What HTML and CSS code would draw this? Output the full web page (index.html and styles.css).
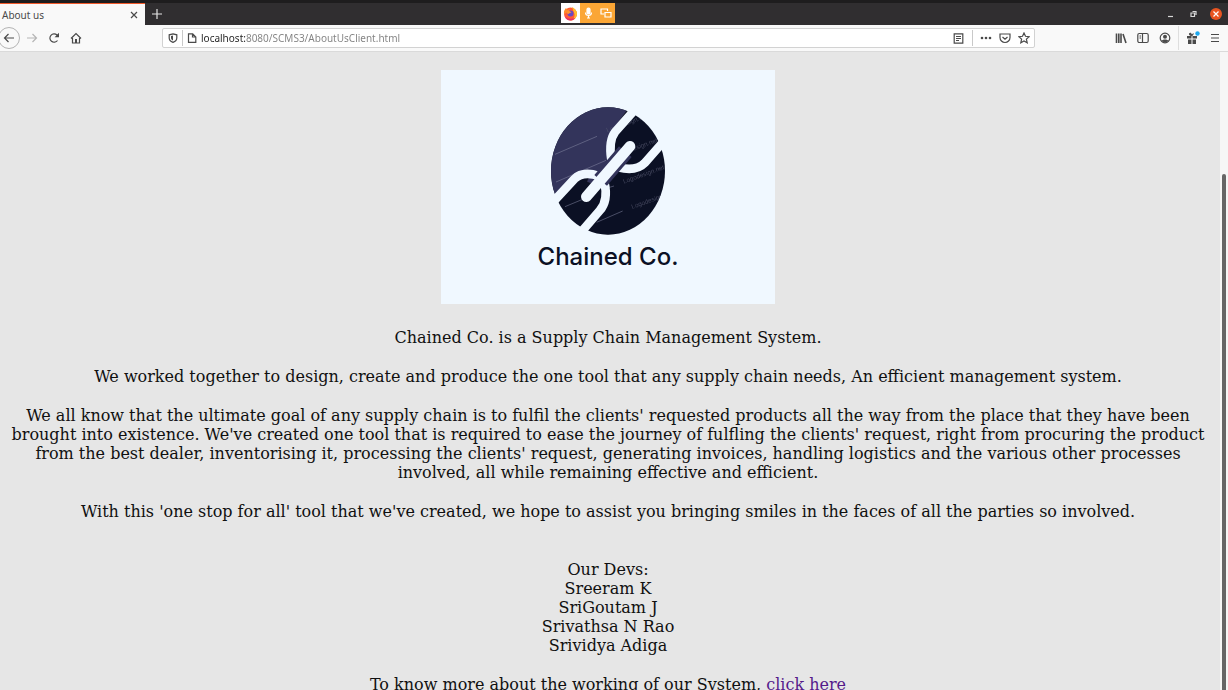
FILE: index.html
```html
<!DOCTYPE html>
<html lang="en">
<head>
<meta charset="utf-8">
<title>About us</title>
<link rel="stylesheet" href="styles.css">
</head>
<body>
<header class="browser">
  <div class="tabs">
    <div class="tab"><span>About us</span>
      <button class="icon-btn" aria-label="Close tab"><svg width="8" height="8" viewBox="0 0 8 8"><path d="M1 1l6 6M7 1l-6 6"/></svg></button>
    </div>
    <button class="icon-btn new-tab" aria-label="New tab"><svg width="10" height="10" viewBox="0 0 10 10"><path d="M5 0v10M0 5h10"/></svg></button>
    <div class="sharing">
      <span class="fox"><svg width="15" height="15" viewBox="0 0 30 30">
        <circle cx="15" cy="16" r="13" fill="#ff5a36"/>
        <path d="M18 2c5 3 11 8 10 15-1 7-6 12-13 12 7-3 9-8 8-13z" fill="#ffbd2f"/>
        <path d="M2 16C1 10 4 6 6 4l3 4 5-2-2 5z" fill="#ff8a2b"/>
        <path d="M3 20c2 6 7 9 12 9s8-2 9-5c-8 3-15 2-21-4z" fill="#e82c68"/>
        <circle cx="15" cy="15" r="6" fill="#6849c4"/>
        <path d="M8 11c4-2 7 0 9 2-3 0-4 2-6 3-3 0-4-3-3-5z" fill="#ff922e"/></svg></span>
      <button class="share" aria-label="Microphone shared"><svg width="9" height="12" viewBox="0 0 9 12"><rect x="3" y="1" width="3" height="6" rx="1.5" fill="#fff"/><path d="M1.500 5.500c0 4 6 4 6 0M4.500 8.500v2.500M3 11h3"/></svg></button>
      <button class="share" aria-label="Screen shared"><svg width="12" height="12" viewBox="0 0 12 12"><path d="M4 7H1V2h6.500v2M5 5.500h6V10H5z"/></svg></button>
    </div>
    <div class="window-buttons">
      <button class="icon-btn" aria-label="Minimize"><svg width="12" height="12" viewBox="0 0 12 12"><path d="M4 8.500h5"/></svg></button>
      <button class="icon-btn" aria-label="Restore"><svg width="12" height="12" viewBox="0 0 12 12"><path d="M4 5h3.500v3.500H4zM5.500 3.500H9V7"/></svg></button>
      <button class="icon-btn close" aria-label="Close"><svg width="12" height="12" viewBox="0 0 12 12"><path d="M3.500 3.500l5 5M8.500 3.500l-5 5"/></svg></button>
    </div>
  </div>
  <nav class="toolbar" aria-label="Browser toolbar">
    <div class="nav-buttons">
      <button class="icon-btn back" aria-label="Back"><svg width="12" height="12" viewBox="0 0 12 12"><path d="M11 6H1.500M5.500 2l-4 4 4 4"/></svg></button>
      <button class="icon-btn" disabled aria-label="Forward"><svg width="12" height="12" viewBox="0 0 12 12"><path d="M1 6h9.500M6.500 2l4 4-4 4"/></svg></button>
      <button class="icon-btn" aria-label="Reload"><svg width="12" height="12" viewBox="0 0 12 12"><path d="M9.500 8.500A4.200 4.200 0 1 1 9 3l1 1"/><path d="M11 .8v4.400H6.600z" class="solid"/></svg></button>
      <button class="icon-btn" aria-label="Home"><svg width="12" height="12" viewBox="0 0 12 12"><path d="M1 6.500l5-5 5 5M2.500 6v5h7V6"/><path d="M5 7h2v4H5z" class="solid"/></svg></button>
    </div>
    <div class="address">
      <svg width="10" height="10" viewBox="0 0 10 10"><path d="M5 .8l3.800 1V5c0 2-1.500 3.500-3.800 4.400C2.700 8.500 1.200 7 1.200 5V1.800z"/><path d="M5 2.500v5C3.500 6.800 3 6 3 5V3z" class="solid"/></svg>
      <i class="rule"></i>
      <svg width="10" height="10" viewBox="0 0 10 10"><path d="M1.500.8h4.200L8.800 4v5.300H1.500zM5.500 1v3h3"/></svg>
      <input class="url" type="text" aria-label="Address" value="localhost:8080/SCMS3/AboutUsClient.html">
      <button class="icon-btn reader" aria-label="Reader view"><svg width="11" height="11" viewBox="0 0 11 11"><path d="M1.200.8h8.600v9.400H1.200zM3 3.500h5M3 5.500h5M3 7.500h3"/></svg></button>
      <i class="rule"></i>
      <div class="page-actions">
        <button class="icon-btn" aria-label="Page actions"><svg width="12" height="12" viewBox="0 0 12 12"><g class="solid"><circle cx="2" cy="6" r="1.300"/><circle cx="6" cy="6" r="1.300"/><circle cx="10" cy="6" r="1.300"/></g></svg></button>
        <button class="icon-btn" aria-label="Save to Pocket"><svg width="12" height="12" viewBox="0 0 12 12"><path d="M1 2h10v3.500a5 5 0 0 1-10 0zM3.500 5L6 7.300 8.500 5"/></svg></button>
        <button class="icon-btn" aria-label="Bookmark"><svg width="12" height="12" viewBox="0 0 12 12"><path d="M6 1l1.500 3.300 3.600.4-2.700 2.400.8 3.600L6 8.900l-3.200 1.800.8-3.600L.9 4.700l3.600-.4z"/></svg></button>
      </div>
    </div>
    <div class="tools">
      <button class="icon-btn" aria-label="Library"><svg width="12" height="12" viewBox="0 0 12 12"><path d="M1.500 1.500V11M3.800 1.500V11M6 1.500V11M8 2l3 9" stroke-width="1.600"/></svg></button>
      <button class="icon-btn" aria-label="Sidebars"><svg width="12" height="12" viewBox="0 0 12 12"><rect x=".8" y="1.500" width="10.400" height="9" rx="1.500"/><path d="M5.500 2v8M2.500 4h1.500M2.500 6h1.500"/></svg></button>
      <button class="icon-btn" aria-label="Account"><svg width="12" height="12" viewBox="0 0 12 12"><circle cx="6" cy="6" r="4.800"/><circle cx="6" cy="4.800" r="2" class="solid"/><path d="M2.500 9c1-2 6-2 7 0L6 10.800z" class="solid"/></svg></button>
      <i class="rule tall"></i>
      <button class="icon-btn" aria-label="What's new"><svg width="14" height="14" viewBox="0 0 14 14"><path d="M1 5h4.500v2.500H1zM6.500 5H11v2.500H6.500zM2 8.500h3.500V13H2zM6.500 8.500H10V13H6.500z" class="solid"/><path d="M6 4.500C3 4.500 3 2 4.500 2.300L6 4.500l1.500-2"/><circle cx="11.500" cy="2.500" r="2.200" fill="#1ca8ee" stroke="none"/></svg></button>
      <button class="icon-btn" aria-label="Menu"><svg width="10" height="12" viewBox="0 0 10 12"><path d="M1 2.500h8M1 6h8M1 9.500h8"/></svg></button>
    </div>
  </nav>
</header>
<div class="viewport">
  <main class="page">
    <figure class="logo">
      <svg class="mark" width="160" height="142" viewBox="-6 0 480 426" aria-hidden="true">
        <defs><clipPath id="disc"><ellipse cx="234" cy="228" rx="171" ry="191"/></clipPath></defs>
        <g clip-path="url(#disc)">
          <path d="M50 20h380v400H50z" fill="#0b1024"/>
          <path d="M50 20h260L245 110 240 190 290 190 215 280 170 260 180 240 140 245 60 330z" fill="#33345b"/>
          <g fill="none" stroke="#8b8da8" stroke-width="1.500">
            <path d="M75 178l126-54M78 261l150-65M105 335l84-35M200 382l78-34M235 278l17-5"/>
          </g>
          <g class="watermark">
            <text transform="translate(232 112) rotate(-20)">Logodesign.net</text>
            <text transform="translate(262 185) rotate(-20)">Logodesign.net</text>
            <text transform="translate(282 266) rotate(-20)">Logodesign.net</text>
            <text transform="translate(307 342) rotate(-20)">Logodesign.net</text>
          </g>
        </g>
        <g fill="none" stroke="#f0f8ff" stroke-width="26">
          <path d="M318 40L256 110Q235 137 244 194M402 138L344 204Q317 231 265 217M72 318L133 252Q158 227 207 243M223 260Q236 317 209 347L158 406"/>
          <path d="M286 170L212 256" stroke="#33345b" stroke-width="50"/>
          <path d="M300 154L169 305" stroke-width="32" stroke-linecap="round"/>
        </g>
      </svg>
      <figcaption>Chained Co.</figcaption>
    </figure>
    <p>Chained Co. is a Supply Chain Management System.</p>
    <p>We worked together to design, create and produce the one tool that any supply chain needs, An efficient management system.</p>
    <p>We all know that the ultimate goal of any supply chain is to fulfil the clients' requested products all the way from the place that they have been brought into existence. We've created one tool that is required to ease the journey of fulfling the clients' request, right from procuring the product from the best dealer, inventorising it, processing the clients' request, generating invoices, handling logistics and the various other processes involved, all while remaining effective and efficient.</p>
    <p>With this 'one stop for all' tool that we've created, we hope to assist you bringing smiles in the faces of all the parties so involved.</p>
    <p class="devs">Our Devs:<br>Sreeram K<br>SriGoutam J<br>Srivathsa N Rao<br>Srividya Adiga</p>
    <p>To know more about the working of our System, <a href="#">click here</a></p>
  </main>
  <div class="scrollbar"><div class="thumb"></div></div>
</div>
</body>
</html>
```
FILE: styles.css
```css
* { box-sizing: border-box; }
body {
  margin: 0;
  height: 100vh;
  display: flex;
  flex-direction: column;
  overflow: hidden;
  background: #e6e6e6;
  font-family: "DejaVu Serif", serif;
  color: #101010;
}
button, input { border: 0; padding: 0; margin: 0; background: none; font: inherit; color: inherit; }
svg { display: block; fill: none; stroke: currentColor; stroke-width: 1.2; }
svg .solid { fill: currentColor; stroke: none; }

.browser { font-family: "Noto Sans", sans-serif; font-size: 10px; flex: none; color: #4a4a4a; }
.icon-btn { display: flex; align-items: center; justify-content: center; flex: none; }
.icon-btn:disabled { color: #b5b5b5; }

.tabs { position: relative; display: flex; height: 25px; border-top: 3px solid #1e1d1e; background: #302e30; }
.tab { width: 145px; display: flex; align-items: center; justify-content: space-between; padding: 0 7px 0 2px; background: #f9f9f9; border-top: 1px solid #f0592b; }
.new-tab { width: 24px; color: #e4e4e4; }
.sharing { position: absolute; left: 561px; top: 0; display: flex; height: 20px; width: 54px; background: #fba635; }
.fox { width: 19px; background: #fff; display: grid; place-items: center; }
.fox svg { stroke: none; }
.share { flex: 1; display: grid; place-items: center; color: #fff; }
.window-buttons { margin-left: auto; display: flex; align-items: center; gap: 11px; padding-right: 6px; color: #d8d8d8; }
.window-buttons .close { border-radius: 50%; background: #e95420; color: #fff; }

.toolbar { display: flex; align-items: center; height: 27px; background: #f9f9f9; border-bottom: 1px solid #dadada; }
.nav-buttons { display: flex; align-items: center; gap: 10px; width: 162px; flex: none; }
.back { width: 22px; height: 22px; border: 1px solid #b4b4b4; border-radius: 50%; margin-left: -2px; margin-right: -4px; }
.address { flex: 1; display: flex; align-items: center; gap: 4px; height: 20px; padding: 0 4px 0 5px; border: 1px solid #d2d2d2; border-radius: 2px; background: #fff; }
.reader { margin-right: 4px; }
.page-actions { display: flex; gap: 7px; margin-left: 3px; }
.url {
  flex: 1;
  min-width: 0;
  font-size: 10px;
  color: transparent;
  caret-color: #222;
  background: linear-gradient(90deg, #222 45px, #808080 45px);
  -webkit-background-clip: text;
  background-clip: text;
  outline: 0;
}
.rule { width: 1px; height: 16px; background: #c9c9c9; flex: none; }
.rule.tall { height: 24px; background: #dedede; margin: 0 -3px; }
.tools { width: 193px; flex: none; display: flex; align-items: center; justify-content: flex-end; gap: 10px; padding-right: 8px; }

.viewport { flex: 1; min-height: 0; display: flex; }
.page { flex: 1; min-width: 0; overflow: hidden; padding: 18px 12px 0 8px; text-align: center; font-size: 16px; line-height: 19px; }
.logo { width: 334px; height: 234px; margin: 0 auto 24px; padding-top: 25px; background: #f0f8ff; }
.mark { margin: 0 auto; }
.watermark { fill: #5c5e76; opacity: .7; stroke: none; font: 19px "Liberation Sans", sans-serif; }
figcaption { margin-top: 3px; font: 500 24px/34px Inter, sans-serif; color: #0b1024; }
p { margin: 0 0 20px; }
.devs { margin-top: 39px; }
a { color: #551a8b; }
.scrollbar { width: 8px; flex: none; padding: 122px 2px 0; background: #f6f6f6; display: flex; }
.thumb { flex: 1; background: #666; border-radius: 2px 2px 0 0; }
```
